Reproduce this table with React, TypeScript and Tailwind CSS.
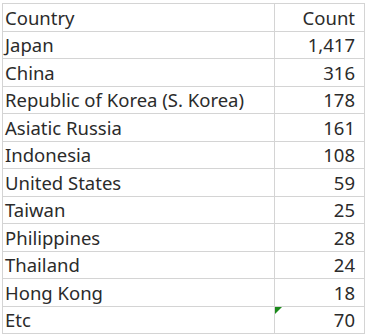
const rows: [string, string][] = [
  ["Country", "Count"],
  ["Japan", "1,417"],
  ["China", "316"],
  ["Republic of Korea (S. Korea)", "178"],
  ["Asiatic Russia", "161"],
  ["Indonesia", "108"],
  ["United States", "59"],
  ["Taiwan", "25"],
  ["Philippines", "28"],
  ["Thailand", "24"],
  ["Hong Kong", "18"],
  ["Etc", "70"],
];

export default function App() {
  return (
    <div className="w-[367px] h-[336px] bg-white overflow-hidden pt-[3px] pl-[2px] font-['Noto_Sans',sans-serif] text-[#2b2b2b]">
      <div className="grid grid-cols-[272px_90px] border-t border-l border-[#d4d4d4] w-fit">
        {rows.map(([country, count], i) => (
          <div key={country} className="contents">
            <div className="h-[27.5px] border-r border-b border-[#d4d4d4] pl-[2px] flex items-end text-[18.5px] leading-[26px] whitespace-nowrap">
              {country}
            </div>
            <div className="relative h-[27.5px] border-r border-b border-[#d4d4d4] pr-[9px] flex items-end justify-end text-[18.5px] leading-[26px]">
              {i === rows.length - 1 && (
                <span className="absolute left-0 top-0 w-0 h-0 border-t-[7px] border-r-[7px] border-t-[#1a8a1a] border-r-transparent" />
              )}
              {count}
            </div>
          </div>
        ))}
      </div>
    </div>
  );
}
